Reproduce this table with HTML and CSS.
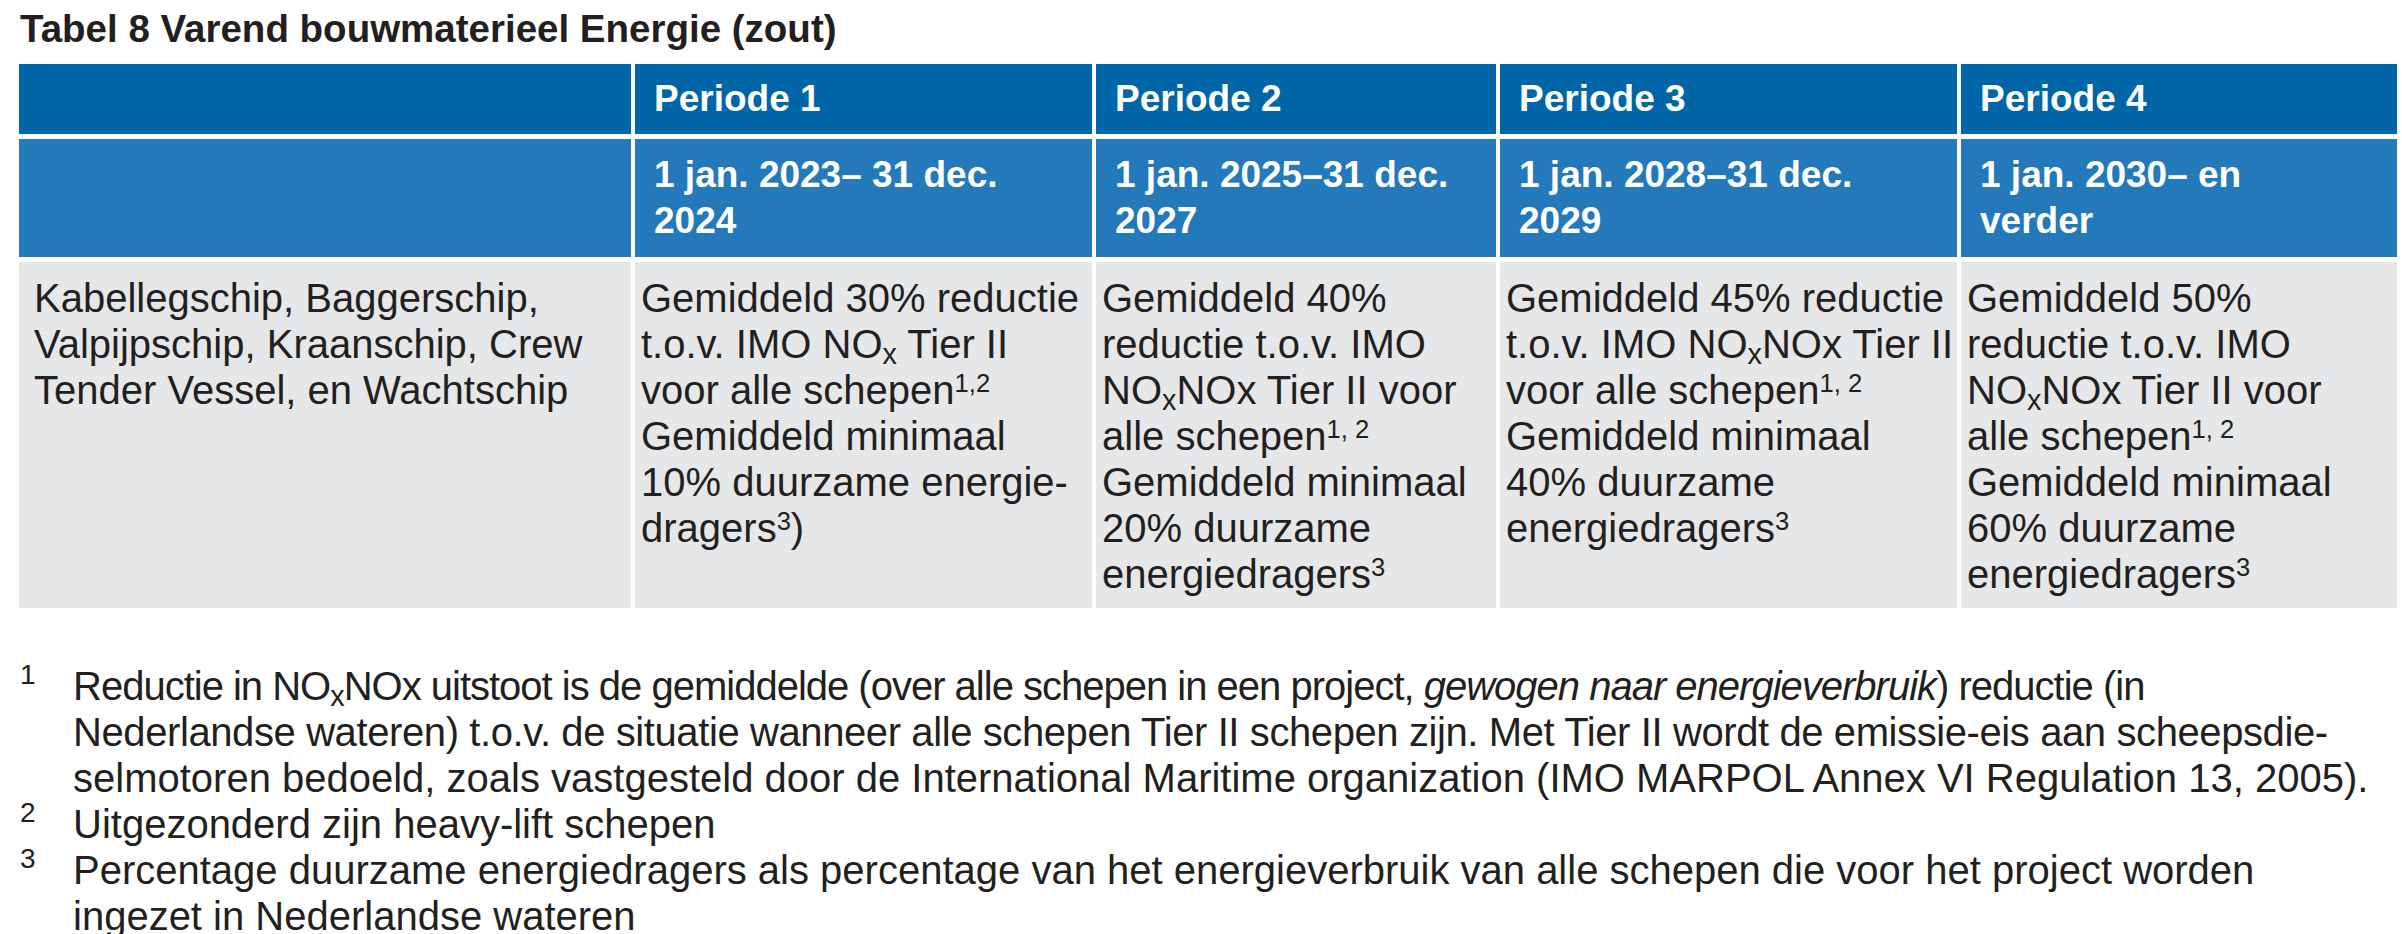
FILE: index.html
```html
<!DOCTYPE html>
<html lang="nl">
<head>
<meta charset="utf-8">
<title>Tabel 8 Varend bouwmaterieel Energie (zout)</title>
<link rel="stylesheet" href="styles.css">
</head>
<body>
<div class="page">
  <h1 class="title">Tabel 8 Varend bouwmaterieel Energie (zout)</h1>
  <div class="grid">
    <div class="hd hd-top"></div>
    <div class="hd hd-top">Periode 1</div>
    <div class="hd hd-top">Periode 2</div>
    <div class="hd hd-top">Periode 3</div>
    <div class="hd hd-top">Periode 4</div>

    <div class="hd hd-date"></div>
    <div class="hd hd-date">1 jan. 2023– 31 dec.<br>2024</div>
    <div class="hd hd-date">1 jan. 2025–31 dec.<br>2027</div>
    <div class="hd hd-date">1 jan. 2028–31 dec.<br>2029</div>
    <div class="hd hd-date">1 jan. 2030– en<br>verder</div>

    <div class="cell cell-first">Kabellegschip, Baggerschip,<br>Valpijpschip, Kraanschip, Crew<br>Tender Vessel, en Wachtschip</div>
    <div class="cell">Gemiddeld 30% reductie<br>t.o.v. IMO NO<sub>x</sub> Tier II<br>voor alle schepen<sup>1,2</sup><br>Gemiddeld minimaal<br>10% duurzame energie-<br>dragers<sup>3</sup>)</div>
    <div class="cell">Gemiddeld 40%<br>reductie t.o.v. IMO<br>NO<sub>x</sub>NOx Tier II voor<br>alle schepen<sup>1, 2</sup><br>Gemiddeld minimaal<br>20% duurzame<br>energiedragers<sup>3</sup></div>
    <div class="cell">Gemiddeld 45% reductie<br>t.o.v. IMO NO<sub>x</sub>NOx Tier II<br>voor alle schepen<sup>1, 2</sup><br>Gemiddeld minimaal<br>40% duurzame<br>energiedragers<sup>3</sup></div>
    <div class="cell">Gemiddeld 50%<br>reductie t.o.v. IMO<br>NO<sub>x</sub>NOx Tier II voor<br>alle schepen<sup>1, 2</sup><br>Gemiddeld minimaal<br>60% duurzame<br>energiedragers<sup>3</sup></div>
  </div>

  <div class="notes">
    <div class="num"><span class="num-mark">1</span></div>
    <div class="txt"><span class="fit-a">Reductie in NO<sub>x</sub>NOx uitstoot is de gemiddelde (over alle schepen in een project, <i>gewogen naar energieverbruik</i>) reductie (in</span><br><span class="fit-b">Nederlandse wateren) t.o.v. de situatie wanneer alle schepen Tier II schepen zijn. Met Tier II wordt de emissie-eis aan scheepsdie-</span><br>selmotoren bedoeld, zoals vastgesteld door de International Maritime organization (IMO MARPOL Annex VI Regulation 13, 2005).</div>
    <div class="num"><span class="num-mark">2</span></div>
    <div class="txt">Uitgezonderd zijn heavy-lift schepen</div>
    <div class="num"><span class="num-mark">3</span></div>
    <div class="txt">Percentage duurzame energiedragers als percentage van het energieverbruik van alle schepen die voor het project worden<br>ingezet in Nederlandse wateren</div>
  </div>
</div>
</body>
</html>
```
FILE: styles.css
```css
html, body {
  margin: 0;
  padding: 0;
  background: #ffffff;
}

body {
  color: #231f20;
  font-family: "Liberation Sans", Arial, sans-serif;
  font-size: 40px;
  line-height: 46px;
}

.page {
  padding: 6px 0 0 19px;
}

.title {
  margin: 0 0 12px 1px;
  font-size: 38.5px;
  line-height: 46px;
  font-weight: bold;
  white-space: nowrap;
}

.grid {
  display: grid;
  grid-template-columns: 612px 457px 400px 457px 436px;
  column-gap: 4px;
  row-gap: 5px;
}

.hd {
  color: #ffffff;
  font-size: 37px;
  font-weight: bold;
  padding-left: 19px;
  padding-right: 6px;
  white-space: nowrap;
}

.hd-top {
  background: #0066a7;
  padding-top: 12px;
  padding-bottom: 12px;
  min-height: 46px;
}

.hd-date {
  background: #2379b9;
  padding-top: 13px;
  padding-bottom: 13px;
  min-height: 92px;
}

.cell {
  background: #e6e7e8;
  padding: 13px 2px 11px 6px;
  white-space: nowrap;
}

.cell-first {
  padding-left: 15px;
}

sup {
  font-size: 0.64em;
  line-height: 0;
  vertical-align: 0.45em;
}

sub {
  font-size: 0.72em;
  line-height: 0;
  vertical-align: -0.2em;
}

.notes {
  margin-top: 55px;
  display: grid;
  grid-template-columns: 54px 1fr;
}

.num {
  padding-left: 1px;
}

.num-mark {
  font-size: 28px;
  line-height: 0;
  vertical-align: 16px;
}

.txt {
  white-space: nowrap;
}

.fit-a {
  letter-spacing: -1px;
}

.fit-b {
  letter-spacing: -0.4px;
}
```
